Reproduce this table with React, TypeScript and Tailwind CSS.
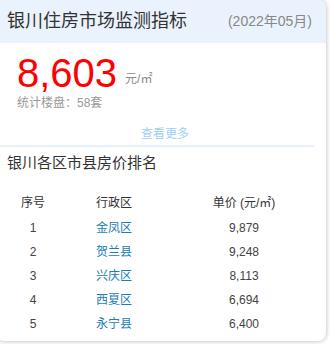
import React from "react";

const rows = [
  { n: 1, name: "金凤区", price: "9,879" },
  { n: 2, name: "贺兰县", price: "9,248" },
  { n: 3, name: "兴庆区", price: "8,113" },
  { n: 4, name: "西夏区", price: "6,694" },
  { n: 5, name: "永宁县", price: "6,400" },
];

export default function App() {
  return (
    <div
      className="w-[330px] h-[344px] bg-white overflow-hidden"
      style={{ fontFamily: '"Liberation Sans", "Noto Sans CJK SC", sans-serif' }}
    >
      <div className="ml-[-4px] w-[330px] h-[341px] bg-white rounded-lg shadow-[0_0_5px_rgba(0,0,0,0.3)] overflow-hidden">
        <div className="h-[43px] bg-[#eaf2fd] flex items-center justify-between pl-[11px] pr-[14px]">
          <span className="text-[18px] text-[#333]">银川住房市场监测指标</span>
          <span className="text-[14px] text-[#888]">(2022年05月)</span>
        </div>
        <div className="pl-[21px] pt-[7px] flex items-end">
          <span className="text-[40px] leading-[46px] text-[#ff0000]">8,603</span>
          <span className="text-[12px] text-[#888] ml-[8px] mb-[8px]">元/㎡</span>
        </div>
        <div className="pl-[21px] text-[12px] leading-[14px] text-[#999]">统计楼盘：58套</div>
        <div className="mt-[17px] text-center text-[12px] leading-[14px] text-[#9ed0f4] pl-[8px]">查看更多</div>
        <div className="mt-[4px] ml-[4px] w-[314px] h-[2px] bg-[#e8f1fc]" />
        <div className="mt-[7px] pl-[11px] text-[15px] leading-[18px] text-[#333]">银川各区市县房价排名</div>
        <div className="mt-[24px] grid grid-cols-[74px_88px_172px] text-[12px] text-[#333] text-center">
          <div className="leading-[14px]">序号</div>
          <div className="leading-[14px]">行政区</div>
          <div className="leading-[14px]">单价 (元/㎡)</div>
        </div>
        <div className="mt-[6px] flex flex-col">
          {rows.map((r) => (
            <div
              key={r.n}
              className="grid grid-cols-[74px_88px_172px] text-[12px] leading-[24px] text-center text-[#444]"
            >
              <div>{r.n}</div>
              <div className="text-[#1a7db6]">{r.name}</div>
              <div>{r.price}</div>
            </div>
          ))}
        </div>
      </div>
    </div>
  );
}
